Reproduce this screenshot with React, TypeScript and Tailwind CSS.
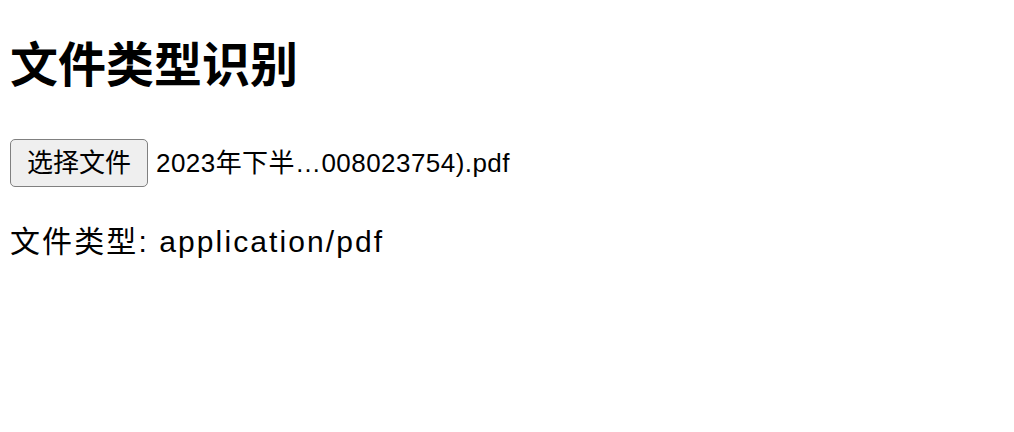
export default function App() {
  return (
    <div
      className="min-h-[432px] bg-white px-[10px] text-black"
      style={{ fontFamily: '"Liberation Sans", "Noto Sans CJK SC", sans-serif' }}
    >
      <h1 className="mt-0 pt-[42px] text-[48px] leading-[48px] font-bold">文件类型识别</h1>

      <div className="mt-[49px] flex items-center gap-[8px]">
        <button
          type="button"
          className="h-[48px] w-[138px] rounded-[5px] border border-[#808080] bg-[#efefef] text-[26px] leading-[30px] text-black"
        >
          选择文件
        </button>
        <span className="text-[26px] leading-[30px] tracking-[0.45px]">2023年下半…008023754).pdf</span>
      </div>

      <p className="mt-[40px] text-[30px] leading-[30px] tracking-[2.1px]">文件类型: application/pdf</p>
    </div>
  );
}
